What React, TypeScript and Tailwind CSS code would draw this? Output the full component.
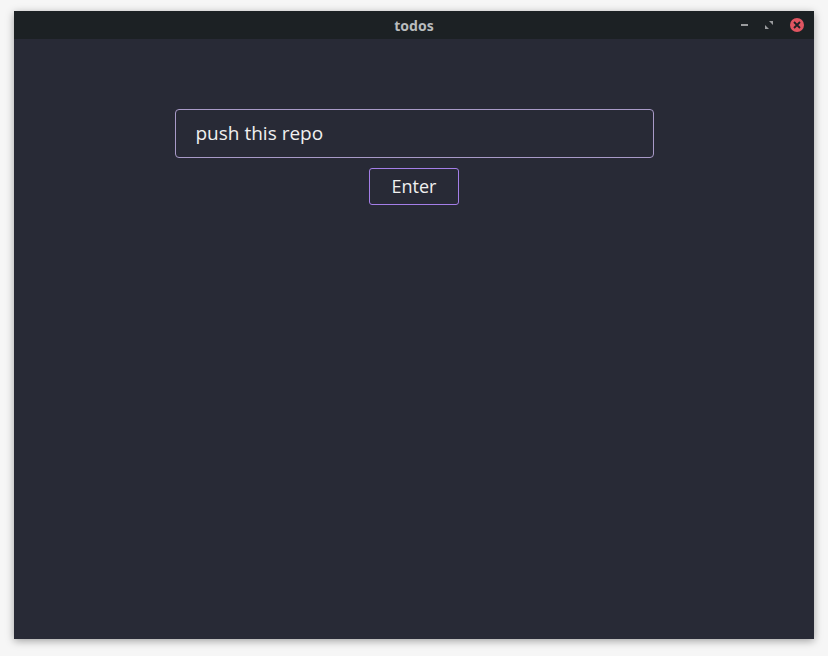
export default function App() {
  return (
    <div className="w-[828px] h-[656px] bg-[#f6f6f6] pt-[11px] pl-[14px]" style={{ fontFamily: '"Open Sans", "Noto Sans", sans-serif' }}>
      <div className="w-[800px] h-[628px] flex flex-col shadow-[0_2px_8px_rgba(0,0,0,0.35)]">
        <div className="h-[28px] bg-[#1c2124] flex items-center relative">
          <div className="flex-1 text-center text-[14px] font-bold text-[#b9bcbe]" style={{ fontFamily: '"Noto Sans", sans-serif' }}>todos</div>
          <div className="absolute right-[10px] top-0 h-[28px] flex items-center gap-[17px]">
            <div className="w-[7px] h-[2px] bg-[#9a9c9e]" />
            <svg width="8" height="8" viewBox="0 0 8 8"><path d="M4 0h4v4zM0 4l4 4H0z" fill="#9a9c9e" /></svg>
            <div className="w-[14px] h-[14px] rounded-full bg-[#e05561] flex items-center justify-center">
              <svg width="8" height="8" viewBox="0 0 8 8"><path d="M1 1l6 6M7 1l-6 6" stroke="#1c2124" strokeWidth="1.8" /></svg>
            </div>
          </div>
        </div>
        <div className="flex-1 bg-[#282a36] flex flex-col items-center pt-[70px]">
          <div className="w-[479px] h-[49px] border border-[#a99ac8] rounded-[4px] flex items-center px-[20px] text-[19px] text-[#f0f0f0]">push this repo</div>
          <div className="mt-[10px] w-[90px] h-[37px] border border-[#a47ee8] rounded-[3px] flex items-center justify-center text-[18px] text-[#f0f0f0]">Enter</div>
        </div>
      </div>
    </div>
  );
}
